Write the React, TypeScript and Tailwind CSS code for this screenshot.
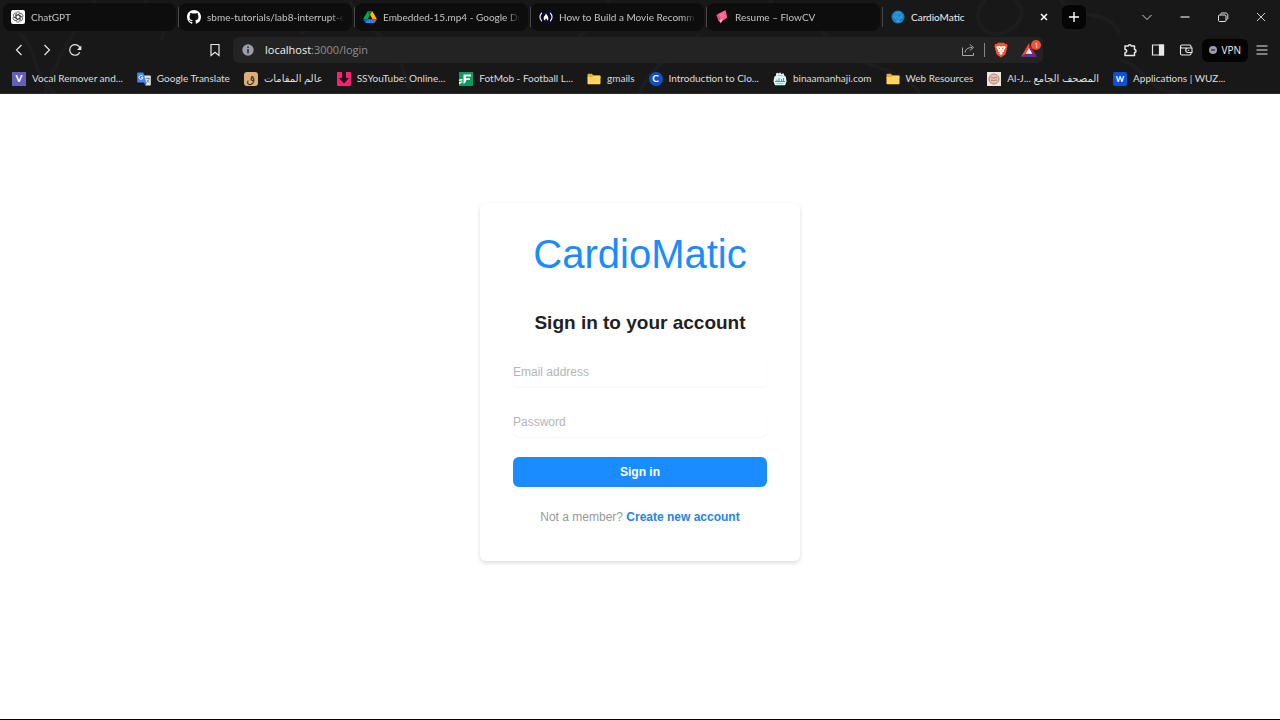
import React from "react";

const UI = "font-['Lato','Open_Sans','DejaVu_Sans',sans-serif]";

function ChatGptIcon() {
  return (
    <svg viewBox="0 0 14 14" className="size-3.5 shrink-0" aria-hidden="true">
      <rect width="14" height="14" rx="2" fill="#fff" />
      <g fill="none" stroke="#333" strokeWidth="0.7">
        {[0, 60, 120, 180, 240, 300].map((a) => (
          <path key={a} transform={`rotate(${a} 7 7)`} d="M5 8.200V4a2.300 2.300 0 0 1 4.300-1M5 5.800l3.600-2.100" />
        ))}
      </g>
    </svg>
  );
}

function GithubIcon() {
  return (
    <svg viewBox="0 0 16 16" className="size-3.5 shrink-0" fill="#fff" aria-hidden="true">
      <path d="M8 0C3.58 0 0 3.58 0 8c0 3.54 2.29 6.53 5.47 7.59.4.07.55-.17.55-.38 0-.19-.01-.82-.01-1.49-2.01.37-2.53-.49-2.69-.94-.09-.23-.48-.94-.82-1.13-.28-.15-.68-.52-.01-.53.63-.01 1.08.58 1.23.82.72 1.21 1.87.87 2.33.66.07-.52.28-.87.51-1.07-1.78-.2-3.64-.89-3.64-3.95 0-.87.31-1.59.82-2.15-.08-.2-.36-1.02.08-2.12 0 0 .67-.21 2.2.82a7.6 7.6 0 0 1 4 0c1.53-1.04 2.2-.82 2.2-.82.44 1.1.16 1.92.08 2.12.51.56.82 1.27.82 2.15 0 3.07-1.87 3.75-3.65 3.95.29.25.54.73.54 1.48 0 1.07-.01 1.93-.01 2.2 0 .21.15.46.55.38A8 8 0 0 0 16 8c0-4.42-3.58-8-8-8Z" />
    </svg>
  );
}

function DriveIcon() {
  return (
    <svg viewBox="0 0 87.3 78" className="h-3 w-3.5 shrink-0" aria-hidden="true">
      <path fill="#0066da" d="m6.6 66.85 3.85 6.65c.8 1.4 1.95 2.5 3.3 3.3l13.75-23.8H0c0 1.55.4 3.1 1.2 4.5z" />
      <path fill="#00ac47" d="M43.65 25 29.9 1.2c-1.35.8-2.5 1.9-3.3 3.3L1.2 48.5A9 9 0 0 0 0 53h27.5z" />
      <path fill="#ea4335" d="M73.55 76.8c1.35-.8 2.5-1.9 3.3-3.3l1.6-2.75 7.65-13.25c.8-1.4 1.2-2.95 1.2-4.5H59.8l5.85 11.5z" />
      <path fill="#00832d" d="M43.65 25 57.4 1.2C56.05.4 54.5 0 52.9 0H34.4c-1.6 0-3.15.45-4.5 1.2z" />
      <path fill="#2684fc" d="M59.8 53H27.5L13.75 76.8c1.35.8 2.9 1.2 4.5 1.2h50.8c1.6 0 3.15-.45 4.5-1.2z" />
      <path fill="#ffba00" d="m73.4 26.5-12.7-22c-.8-1.4-1.95-2.5-3.3-3.3L43.65 25 59.8 53h27.45c0-1.55-.4-3.1-1.2-4.5z" />
    </svg>
  );
}

function FreeCodeCampIcon() {
  return (
    <svg viewBox="0 0 14 14" className="size-3.5 shrink-0" aria-hidden="true">
      <rect width="14" height="14" rx="2" fill="#0a0a23" />
      <g fill="none" stroke="#fff" strokeWidth="1.1" strokeLinecap="round">
        <path d="M2.6 3.2C.7 5.4.7 8.6 2.6 10.8M11.4 3.2c1.9 2.2 1.9 5.4 0 7.6" />
      </g>
      <path
        fill="#fff"
        fillRule="evenodd"
        d="M6.900 3.200c.7 1.500 2.500 3 2.500 5.100 0 1.100-.5 2-1.300 2.500.2-.9 0-1.600-.5-2.100-.7 0-1.100.1-1.300.6-.2.500-.2 1 .1 1.500-1.100-.4-1.800-1.300-1.800-2.500 0-2 2-3 2.300-5.100Z"
      />
    </svg>
  );
}

function FlowCvIcon() {
  return (
    <svg viewBox="0 0 14 14" className="size-3.5 shrink-0" aria-hidden="true">
      <path fill="#ff5c8d" d="m2.400 4.300 7.300-3.900c.6-.3 1 0 1.100.5l1.300 6.300c.1.500 0 .800-.5 1L6 11.700 3.600 9.500Z" />
      <path fill="#f0407a" d="m1.300 5 1.800-.9L5.800 11l-1.200.6c-.5.200-.9 0-1-.4Z" />
      <path fill="#ffb3ca" d="m4.300 10.200 3.800-1.800-2.300 5.100Z" />
      <path stroke="#ff9dbc" strokeWidth="0.8" d="m5 5.500 4-2M5.700 7.500l4-2" />
    </svg>
  );
}

function CardioIcon() {
  return (
    <svg viewBox="0 0 14 14" className="size-3.5 shrink-0" aria-hidden="true">
      <circle cx="7" cy="7" r="6.500" fill="#1580c8" />
      <g fill="none" stroke="#5cb0e6" strokeWidth="0.600">
        <path d="M3.300 4.800c1.200-1.800 2.900-1.300 3.700 0 .8-1.300 2.500-1.800 3.700 0 .6 2.300-1.700 4.400-3.700 5.800-2-1.400-4.300-3.500-3.700-5.800Z" />
        <path d="M2.500 7h2.700l.8-1.500 1.300 3 .9-1.500h3.300M5 11.500h4M4.500 2.500h5" />
      </g>
    </svg>
  );
}

type Tab = { title: string; icon: React.ReactNode };

const tabs: Tab[] = [
  { title: "ChatGPT", icon: <ChatGptIcon /> },
  { title: "sbme-tutorials/lab8-interrupt-e", icon: <GithubIcon /> },
  { title: "Embedded-15.mp4 - Google Dr", icon: <DriveIcon /> },
  { title: "How to Build a Movie Recomm", icon: <FreeCodeCampIcon /> },
  { title: "Resume – FlowCV", icon: <FlowCvIcon /> },
];

function FolderIcon() {
  return (
    <svg viewBox="0 0 14 14" className="size-3.5 shrink-0" aria-hidden="true">
      <path fill="#e8b02d" d="M.5 2.800c0-.6.4-1 1-1h3.300l1.500 1.500h6.200c.6 0 1 .4 1 1V6H.5Z" />
      <path fill="#ffd55e" d="M.5 5h4.800l1.300-1h5.900c.6 0 1 .4 1 1v6.200c0 .6-.4 1-1 1h-11c-.6 0-1-.4-1-1Z" />
    </svg>
  );
}

function TranslateIcon() {
  return (
    <svg viewBox="0 0 14 14" className="size-3.5 shrink-0" aria-hidden="true">
      <path fill="#dfe3e8" d="M6 3.500h7c.5 0 .8.3.8.8v8.400c0 .5-.3.800-.8.800H8.300Z" />
      <path fill="#3367d6" d="m6.800 10.500 1.500 3 1.700-3Z" />
      <path fill="#4285f4" d="M1 .5h5.300l3 10H1a.8.8 0 0 1-.8-.8V1.300C.2.800.5.500 1 .500Z" />
      <path fill="none" stroke="#fff" d="M5.700 4.200A2 2 0 1 0 6 5.700H4.200" />
      <path fill="none" stroke="#6b7785" strokeWidth="0.8" d="M8.800 6.500h4M10.800 5.500v1M12.200 6.500c-.4 2-1.500 3-2.500 3.800M10 8c.6 1.200 1.400 2 2.300 2.600" />
    </svg>
  );
}

function DownloaderIcon() {
  return (
    <svg viewBox="0 0 14 14" className="size-3.5 shrink-0" aria-hidden="true">
      <rect width="14" height="14" rx="1" fill="#ff1f6d" />
      <path fill="#20101c" d="M5 0h4v6h3L7 11.500 2 6h3Z" />
    </svg>
  );
}

function FotmobIcon() {
  return (
    <svg viewBox="0 0 14 14" className="size-3.5 shrink-0" aria-hidden="true">
      <rect width="14" height="14" fill="#0f9960" />
      <path fill="#fff" d="M4.500 2.500H12v2H7v1.700h4v1.900H7.400C7 10 6 11.500 4.500 12ZM0 7.500l3.500-.5v1.200L0 9ZM0 10l3.500-.8v1L0 12.500Z" />
    </svg>
  );
}

function JarIcon() {
  return (
    <svg viewBox="0 0 14 14" className="size-3.5 shrink-0" aria-hidden="true">
      <path fill="#e3f5f2" d="M3 1.500 5 .8l1 1 1-1.500L8.500 2l2-.8.8 2.300 1.500 1.300.8 4.500-1.500 4H2L.5 9.300l.8-4.500L3 3.500Z" />
      <path stroke="#30a795" d="M2 9.500h10M4 7.500V9M6 6v3M8.500 7v2M10.500 6v3" fill="none" />
      <path stroke="#7fb8b0" strokeWidth="0.7" d="M3.500 11.500h7M4.500 3.500h5" />
    </svg>
  );
}

function SealIcon() {
  return (
    <svg viewBox="0 0 14 14" className="size-3.5 shrink-0" aria-hidden="true">
      <rect width="14" height="14" fill="#f1e4da" />
      <circle cx="7" cy="7" r="5" fill="#e3c3b6" stroke="#b88578" strokeWidth="1" />
      <path fill="none" stroke="#9d6659" strokeWidth="0.8" d="M4 6c1.200-1.500 2 .8 3 0s2-.8 3 .2M4 8.500c1.500-1 2 .6 3.200 0s1.800-.4 2.800 0" />
    </svg>
  );
}

const badge = "flex size-3.5 shrink-0 items-center justify-center font-bold text-white";

const bookmarks: { label: string; icon: React.ReactNode }[] = [
  { label: "Vocal Remover and...", icon: <span className={`${badge} bg-[#665fb8] text-[10px]`}>V</span> },
  { label: "Google Translate", icon: <TranslateIcon /> },
  {
    label: "عالم المقامات",
    icon: <span className="flex size-3.5 shrink-0 items-center justify-center rounded-[3px] bg-[#dcae7c] text-[11px] leading-none text-[#2a2018]">ق</span>,
  },
  { label: "SSYouTube: Online...", icon: <DownloaderIcon /> },
  { label: "FotMob - Football L...", icon: <FotmobIcon /> },
  { label: "gmails", icon: <FolderIcon /> },
  { label: "Introduction to Clo...", icon: <span className={`${badge} rounded-full bg-[#0b52c4] text-[10px]`}>C</span> },
  { label: "binaamanhaji.com", icon: <JarIcon /> },
  { label: "Web Resources", icon: <FolderIcon /> },
  { label: "Al-J... المصحف الجامع", icon: <SealIcon /> },
  { label: "Applications | WUZ...", icon: <span className={`${badge} rounded-[2px] bg-[#0a52d6] text-[8px]`}>W</span> },
];

function IconButton({ label, className, children }: { label: string; className: string; children: React.ReactNode }) {
  return (
    <button type="button" aria-label={label} className={`flex shrink-0 items-center justify-center ${className}`}>
      <svg viewBox="0 0 14 14" className="size-3.5" fill="none" stroke="currentColor" strokeWidth="1.200" aria-hidden="true">
        {children}
      </svg>
    </button>
  );
}

function HeaderTexture() {
  return (
    <svg
      viewBox="0 0 1280 94"
      preserveAspectRatio="none"
      className="pointer-events-none absolute inset-0 size-full"
      fill="none"
      stroke="#fff"
      strokeOpacity="0.025"
      strokeWidth="4"
      aria-hidden="true"
    >
      <path d="M20 34c20 20 10 40 35 60M95 0c-15 30-30 35-50 94M145 0c10 20 25 30 15 40M300 34c20-12 40-10 52-30M350 0c15 40 40 20 60 90M560 60c15-20 30-30 50-60M640 94c10-30 40-40 60-60M770 0c20 40 50 10 60 45M985 0c-20 20 5 45 25 30s10-25 5-30M1060 0c20 20 50 10 60 34M1120 60c30 10 20 30 60 34M850 60c30 5 60 20 70 34" />
    </svg>
  );
}

function TabStrip() {
  return (
    <div className="flex h-[34px] items-start pt-[3px]">
      <div role="tablist" aria-label="Open tabs" className="flex min-w-0 pl-[3px]">
        {tabs.map((tab) => (
          <div key={tab.title} className="flex w-44 min-w-0 items-center gap-0.5">
            <button
              type="button"
              role="tab"
              aria-selected="false"
              className="flex h-7 min-w-0 flex-1 items-center gap-1.5 rounded-lg bg-[#0d0d0d] px-2 text-[10px] text-[#c4c4c4]"
            >
              {tab.icon}
              <span className="min-w-0 flex-1 overflow-hidden mask-r-from-90% text-left whitespace-nowrap">{tab.title}</span>
            </button>
            <span className="h-5 w-px bg-[#484848]" />
          </div>
        ))}
        <div className="flex h-7 w-44 min-w-0 items-center pr-2 pl-2">
          <button type="button" role="tab" aria-selected="true" className="flex min-w-0 flex-1 items-center gap-1.5 text-[10px] text-[#f0f0f0]">
            <CardioIcon />
            CardioMatic
          </button>
          <IconButton label="Close tab" className="text-white">
            <path d="m4 4 6 6M10 4l-6 6" strokeWidth="1.500" />
          </IconButton>
        </div>
      </div>
      <IconButton label="New tab" className="mt-0.5 ml-[3px] h-6 w-6 rounded-md bg-[#050505] text-white">
        <path d="M7 2v10M2 7h10" strokeWidth="1.400" />
      </IconButton>
      <div className="ml-auto flex h-7 text-[#e4e4e4]">
        <IconButton label="Search tabs" className="w-[38px]">
          <path d="m2.500 5 4.500 4.500L11.500 5" strokeWidth="0.900" />
        </IconButton>
        <IconButton label="Minimize" className="w-[38px]">
          <path d="M2.500 7h9" />
        </IconButton>
        <IconButton label="Restore" className="w-[38px]">
          <path d="M3.500 5h5.500c.6 0 1 .4 1 1v4.500c0 .6-.4 1-1 1H3.500c-.6 0-1-.4-1-1V6c0-.6.4-1 1-1ZM4.500 4.500c.1-1 .6-1.500 1.500-1.500h3.500c1.500 0 2.300.8 2.300 2.300V8c0 1-.5 1.500-1.500 1.500" strokeWidth="1" />
        </IconButton>
        <IconButton label="Close window" className="w-[38px]">
          <path d="m3 3 8 8M11 3l-8 8" strokeWidth="0.900" />
        </IconButton>
      </div>
    </div>
  );
}

function Toolbar() {
  return (
    <div className="flex h-8 items-center pr-1 pl-[5px] font-['Open_Sans','DejaVu_Sans',sans-serif] text-[#e8e8e8]">
      <div className="flex">
        <IconButton label="Back" className="h-7 w-7">
          <path d="M9.500 2 4.500 7l5 5" />
        </IconButton>
        <IconButton label="Forward" className="h-7 w-7">
          <path d="m4.500 2 5 5-5 5" />
        </IconButton>
        <IconButton label="Reload" className="h-7 w-7">
          <path d="M11.800 9.200A5.300 5.300 0 1 1 12 5.200" />
          <path d="M9 7h4.300V2.500Z" fill="currentColor" stroke="none" />
        </IconButton>
      </div>
      <div className="ml-28 flex min-w-0 flex-1 items-center">
        <IconButton label="Bookmark this page" className="h-7 w-7">
          <path d="M3 1.500h8v11L7 9.300l-4 3.200Z" />
        </IconButton>
        <div className="ml-1 flex h-[26px] min-w-0 flex-1 items-center rounded-md bg-[#232323] pr-0.5 pl-2">
          <svg viewBox="0 0 14 14" className="size-3.5 shrink-0" aria-hidden="true">
            <circle cx="7" cy="7" r="5.700" fill="#9aa0a6" />
            <path stroke="#232323" strokeWidth="1.400" d="M7 3.500v1.400M7 6v4.500" />
          </svg>
          <p className="ml-2.5 flex-1 text-[11px] leading-4 text-[#8f8f8f]">
            <span className="text-[#f2f2f2]">localhost</span>:3000/login
          </p>
          <IconButton label="Share" className="h-6 w-6 text-[#a8a8a8]">
            <path d="M1.500 4.500v8h11V10M4 9.500c.5-3.500 3-5 7-5M8.800 1.500l3.700 3-3.700 3" strokeWidth="1" />
          </IconButton>
          <span className="mx-1 h-3.5 w-px bg-[#858585]" />
          <button type="button" aria-label="Brave Shields" className="flex h-6 w-6 items-center justify-center">
            <svg viewBox="0 0 14 16" className="h-4 w-3.5" aria-hidden="true">
              <path fill="#fb542b" d="M4 .8h6l1.200 1.300 1.500-.1 1 2-.5 1.300-1.500 6.200c-.2.800-.8 1.300-1.500 1.800L7 15.500l-3.200-2.200c-.7-.5-1.300-1-1.500-1.800L.8 5.300.3 4l1-2 1.500.1Z" />
              <path fill="#fff" d="m2.800 4.300 2-.4L7 4.400l2.200-.5 2 .4.500 1.400-2 2.800.3 1.200-2 .9.800.8L7 13l-1.800-1.600.8-.8-2-.9.300-1.200-2-2.800Z" />
              <path fill="#fb542b" d="m4 5.500 2 .4-.3 1.700ZM10 5.500l-2 .4.300 1.700ZM6.300 8.500h1.400L7 10Z" />
            </svg>
          </button>
          <button type="button" aria-label="Brave Rewards, 1 notification" className="relative ml-1 flex h-6 w-6 items-center justify-center">
            <svg viewBox="0 0 16 14" className="h-3.5 w-4" aria-hidden="true">
              <path fill="#ff4724" d="M8 0 0 14l8-5Z" />
              <path fill="#9e1f63" d="m8 0 8 14-8-5Z" />
              <path fill="#662d91" d="M0 14h16L8 8.500Z" />
              <path fill="#fff" d="m8 5 3.300 5.800H4.700Z" />
            </svg>
            <span className="absolute top-0.5 right-0 flex size-2.5 items-center justify-center rounded-full bg-[#f0522d] text-[7px] leading-none text-white">1</span>
          </button>
        </div>
      </div>
      <div className="ml-[73px] flex items-center">
        <IconButton label="Extensions" className="h-7 w-7">
          <path d="M2 3h3.200a1.600 1.600 0 0 1 3.100 0h3.200v3.400a1.500 1.500 0 0 1 0 3v3.100H2V9.800a1.700 1.700 0 0 0 0-3.400Z" strokeWidth="1.500" strokeLinejoin="round" />
        </IconButton>
        <IconButton label="Side panel" className="h-7 w-7">
          <path d="M1.500 2h11v10h-11z" />
          <path d="M8.500 2h4v10h-4z" fill="currentColor" />
        </IconButton>
        <IconButton label="Wallet" className="h-7 w-7">
          <path d="M12 5V3.500a1.500 1.500 0 0 0-1.500-1.500H3a1.500 1.500 0 0 0-1.500 1.500v7A1.500 1.500 0 0 0 3 12h7.500a1.500 1.500 0 0 0 1.500-1.500V9.500M1.500 4c.2.700.6 1 1.500 1h10v4.500H9a2.200 2.200 0 0 1 0-4.500M8.800 7.300h1.500" strokeWidth="1.100" />
        </IconButton>
        <button type="button" className="ml-0.5 flex h-[23px] items-center gap-1 rounded-md bg-[#040404] px-[7px] text-[10px] text-[#eeeeee]">
          <svg viewBox="0 0 8 8" className="size-2" aria-hidden="true">
            <circle cx="4" cy="4" r="4" fill="#9c9cae" />
            <path stroke="#08080a" d="M2 4h4" />
          </svg>
          VPN
        </button>
        <IconButton label="Menu" className="h-7 w-7">
          <path d="M1.500 3h11M1.500 7h11M1.500 11h11" />
        </IconButton>
      </div>
    </div>
  );
}

function BookmarksBar() {
  return (
    <nav aria-label="Bookmarks" className="flex h-[27px] items-center gap-3.5 overflow-hidden px-3 pb-0.5 text-[10px] text-[#dedede]">
      {bookmarks.map((b) => (
        <a key={b.label} href="#" className="flex shrink-0 items-center gap-1.5 whitespace-nowrap">
          {b.icon}
          <span>{b.label}</span>
        </a>
      ))}
    </nav>
  );
}

function SignInCard() {
  const field =
    "block h-[30px] w-full rounded-md bg-white text-xs text-[#222] shadow-[0_1px_2px_rgba(0,0,0,0.05)] outline-none placeholder:text-[#b5b5b5]";
  return (
    <section className="w-full max-w-80 rounded-md bg-white px-[33px] pt-7 pb-[34px] shadow-[0_2px_4px_rgba(0,0,0,0.14)]">
      <h1 className="text-center text-[40px] leading-[46px] text-[#1a8cff]">CardioMatic</h1>
      <h2 className="mt-8 text-center text-[19px] leading-7 font-bold text-[#212121]">Sign in to your account</h2>
      <form className="mt-5 flex flex-col gap-5" onSubmit={(e) => e.preventDefault()}>
        <input type="email" aria-label="Email address" placeholder="Email address" className={field} />
        <input type="password" aria-label="Password" placeholder="Password" className={field} />
        <button type="submit" className="h-[30px] w-full rounded-md bg-[#1a8cff] text-xs font-bold text-white">
          Sign in
        </button>
      </form>
      <p className="mt-5 text-center text-xs leading-5 text-[#999]">
        Not a member?{" "}
        <a href="#" className="font-bold text-[#2684e8]">
          Create new account
        </a>
      </p>
    </section>
  );
}

export default function App() {
  return (
    <div className="flex min-h-screen flex-col border-b border-black bg-white font-['Liberation_Sans',Arial,sans-serif]">
      <header className={`relative border-b border-[#2b2b2b] bg-[#181818] ${UI}`}>
        <HeaderTexture />
        <div className="relative">
          <TabStrip />
          <Toolbar />
          <BookmarksBar />
        </div>
      </header>
      <main className="flex flex-1 flex-col items-center px-4 pt-[109px] pb-16">
        <SignInCard />
      </main>
    </div>
  );
}
